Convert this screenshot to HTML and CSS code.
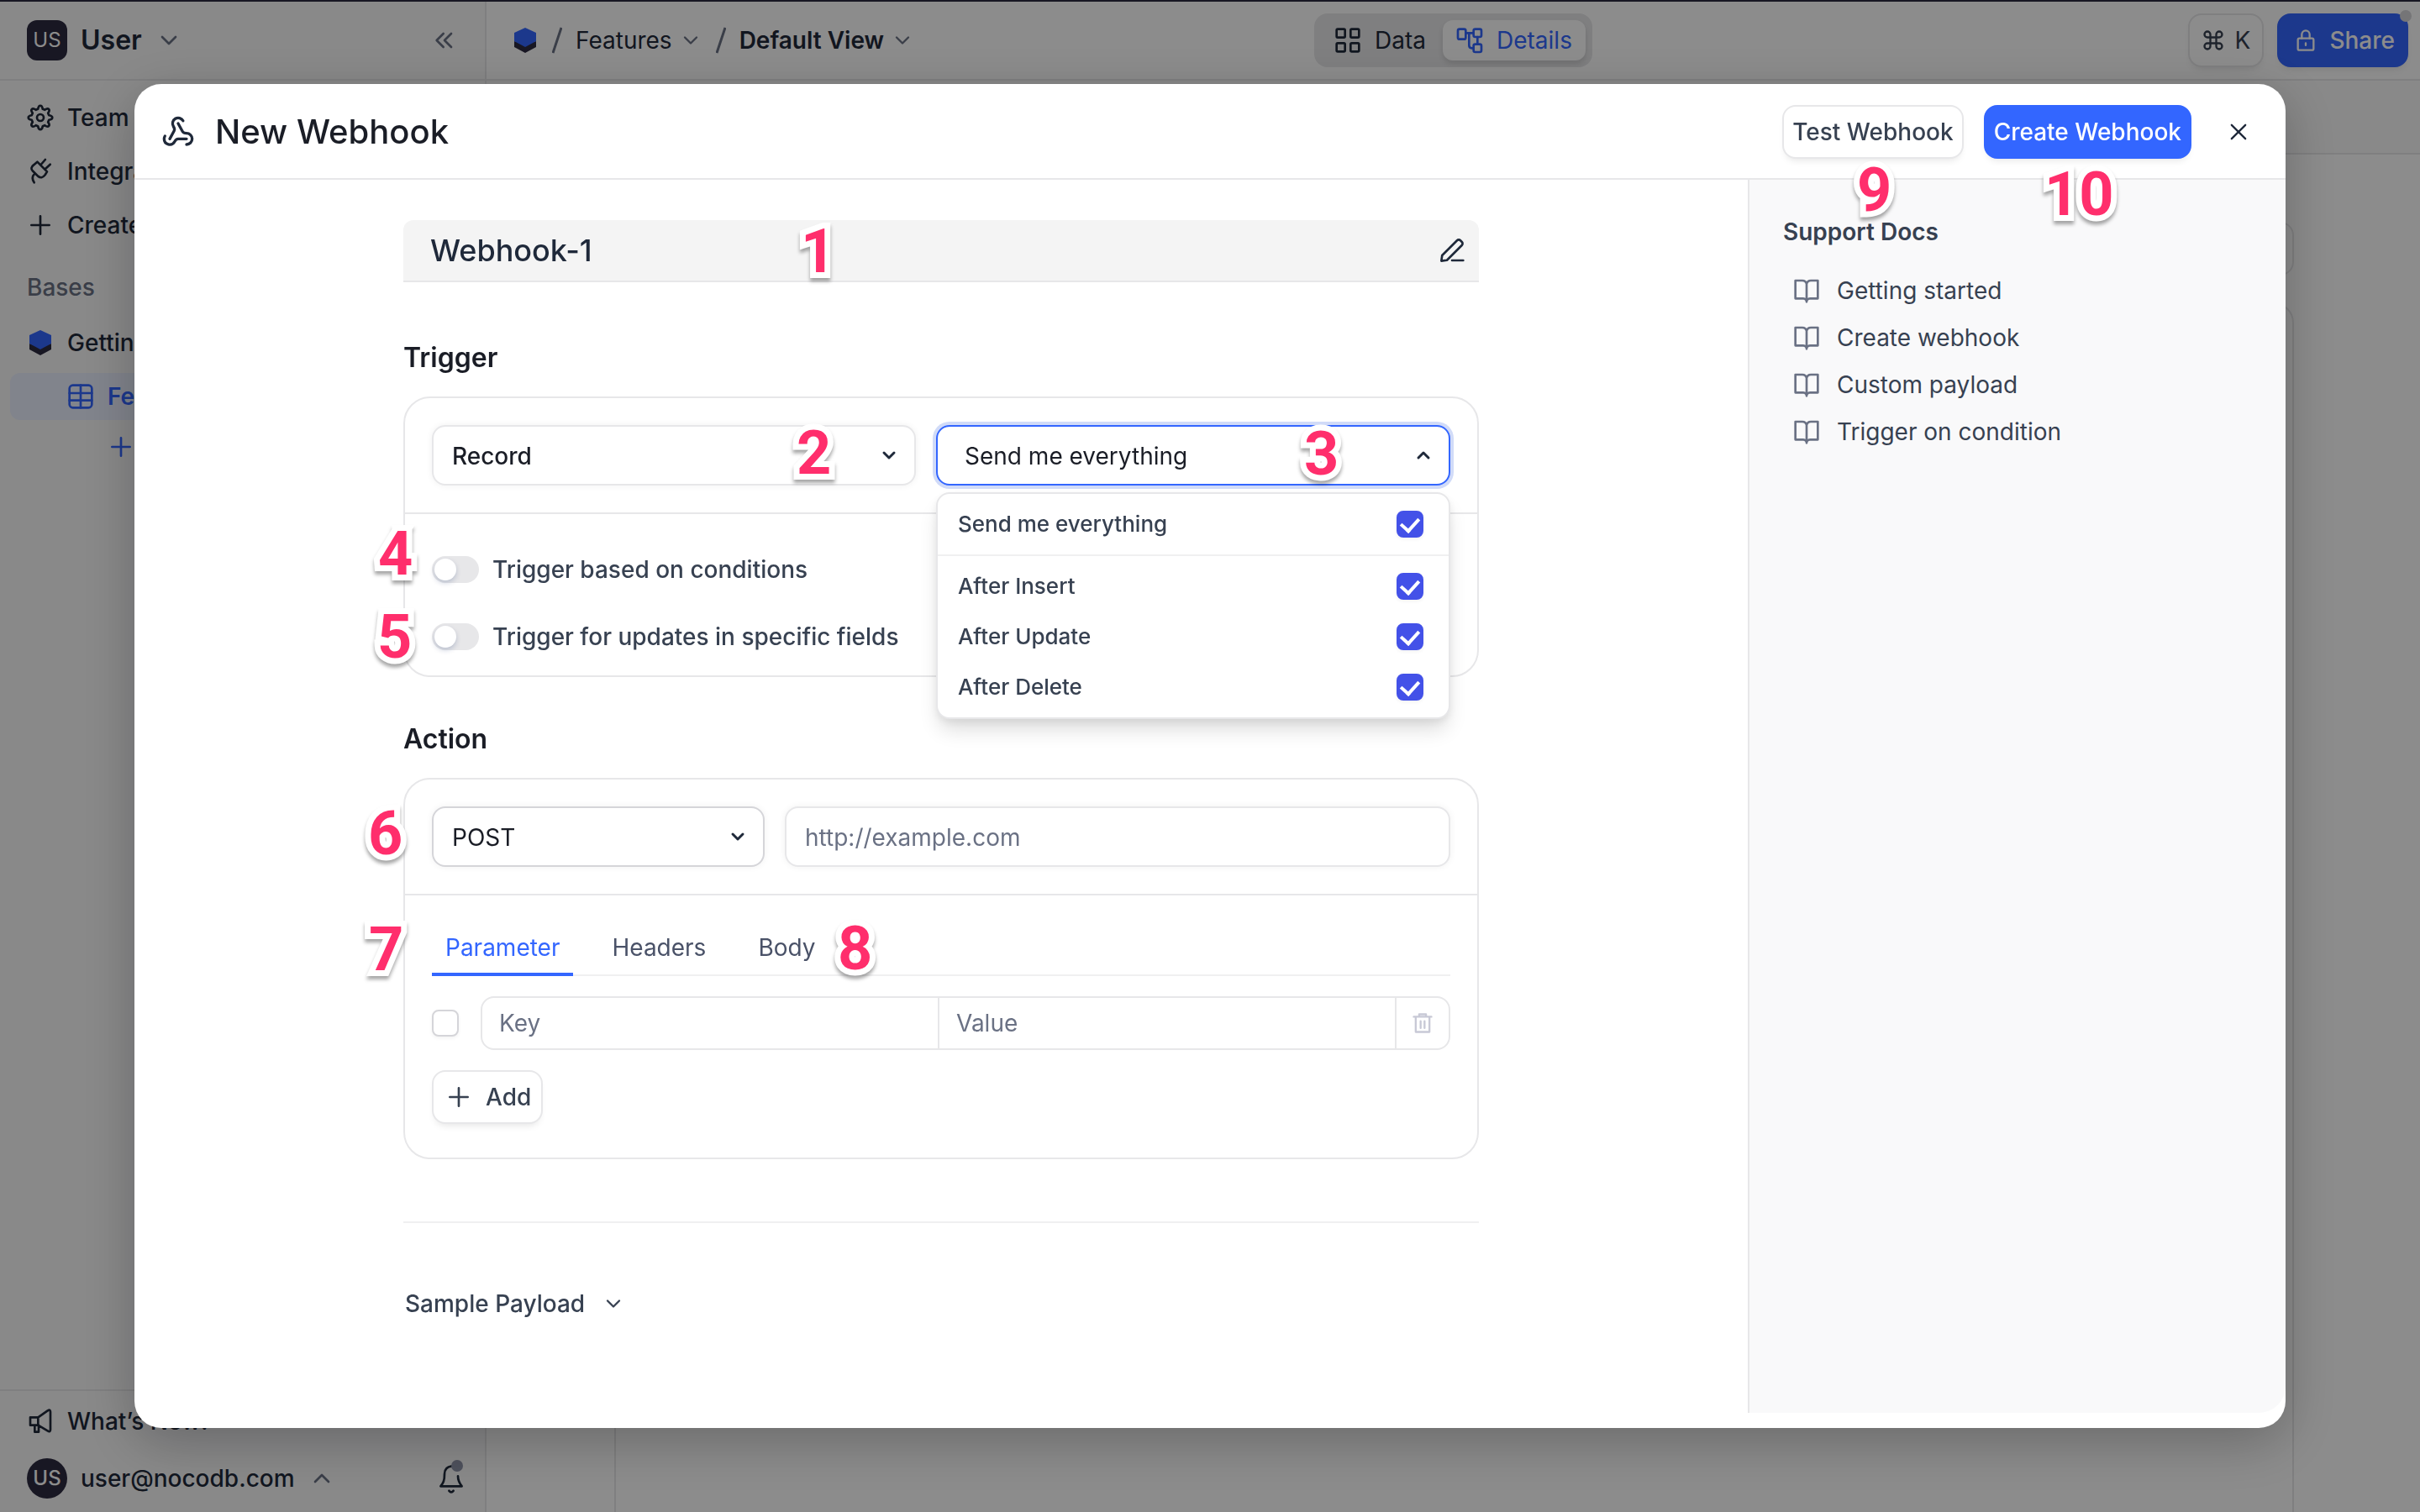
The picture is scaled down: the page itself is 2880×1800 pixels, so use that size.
FILE: index.html
```
<!DOCTYPE html>
<html lang="en">
<head>
<meta charset="UTF-8">
<meta name="viewport" content="width=device-width, initial-scale=1.0">
<title>New Webhook</title>
<link rel="stylesheet" href="styles.css">
</head>
<body>
<!-- icon set -->
<svg class="sprite" aria-hidden="true">
<symbol id="i-down" viewBox="0 0 24 24"><path d="m6 9 6 6 6-6"/></symbol>
<symbol id="i-up" viewBox="0 0 24 24"><path d="m6 15 6-6 6 6"/></symbol>
<symbol id="i-collapse" viewBox="0 0 24 24"><path d="m11 18-6-6 6-6M18 18l-6-6 6-6"/></symbol>
<symbol id="i-plus" viewBox="0 0 24 24"><path d="M12 4v16M4 12h16"/></symbol>
<symbol id="i-close" viewBox="0 0 24 24"><path d="m5 5 14 14M19 5 5 19"/></symbol>
<symbol id="i-gear" viewBox="0 0 24 24"><circle cx="12" cy="12" r="3"/><path d="M9.9 4.3C10.5.3 13.5.3 14.1 4.3L16 5.1C19.2 2.700 21.300 4.800 18.900 8L19.700 9.900C23.700 10.500 23.700 13.500 19.700 14.100L18.900 16C21.300 19.200 19.200 21.300 16 18.900L14.100 19.700C13.500 23.700 10.500 23.700 9.900 19.700L8 18.900C4.800 21.300 2.700 19.200 5.100 16L4.300 14.100C.3 13.500.3 10.500 4.300 9.900L5.100 8C2.700 4.800 4.800 2.700 8 5.100z"/></symbol>
<symbol id="i-plug" viewBox="-2 0 24 24"><path d="M7.300 3.500 16 12.300l-1.800 2.900q-3 3.800-6.200 1.200l-4.800-4.800q-2.600-2.600.8-5.300zM10.500 6l3.900-4.500M14.300 10l4.500-4.200M5 14q-3.500 3.500-.5 8"/></symbol>
<symbol id="i-table" viewBox="0 0 24 24"><rect x="2" y="2" width="20" height="20" rx="3"/><path d="M2 9h20M2 15.500h20M12 2v20"/></symbol>
<symbol id="i-cube" viewBox="0 0 26 30"><path class="cube-base" d="M0 16 13 20 26 16v7L13 30 0 23z"/><path class="cube-top" d="M13 0 26 6v10l-13 7-13-7V6z"/></symbol>
<symbol id="i-horn" viewBox="0 0 24 24"><path d="M3 8.500h7L18.500 2.500q2.500-1.500 2.500 1v16q0 2.500-2.500 1l-8.500-5H3zM10 8.500v7M7 15.500v6h3.500v-6"/></symbol>
<symbol id="i-bell" viewBox="0 0 24 28"><path d="M12.500 3C8.500 3.500 6 6 6 10c0 6-1 8-3.500 11h19c-2.500-3-3.500-5-3.500-9M10 25q2 2.500 4 0"/></symbol>
<symbol id="i-grid" viewBox="0 0 24 24"><rect x="2" y="2" width="7.500" height="7.500" rx="1"/><rect x="14.500" y="2" width="7.500" height="7.500" rx="1"/><rect x="2" y="14.500" width="7.500" height="7.500" rx="1"/><rect x="14.500" y="14.500" width="7.500" height="7.500" rx="1"/></symbol>
<symbol id="i-flow" viewBox="0 0 24 24"><rect x="1.500" y="2" width="7" height="9" rx="1.500"/><rect x="15.500" y="2" width="7" height="7" rx="1.500"/><rect x="15.500" y="15.500" width="7" height="7" rx="1.500"/><path d="M8.500 5.500h7M19 9v6.500M11.500 5.500v11q0 2.500 2.500 2.500h1.500"/></symbol>
<symbol id="i-cmd" viewBox="0 0 24 24"><path d="M18 3a3 3 0 0 0-3 3v12a3 3 0 1 0 3-3H6a3 3 0 1 0 3 3V6a3 3 0 1 0-3 3h12a3 3 0 0 0 0-6z"/></symbol>
<symbol id="i-lock" viewBox="0 0 24 24"><rect x="4" y="10" width="16" height="12" rx="1.500"/><path d="M8 10V6a4 4 0 0 1 8 0v4M12 15v2"/></symbol>
<symbol id="i-webhook" viewBox="0 0 24 24"><path d="M18 16.980h-5.990c-1.100 0-1.950.940-2.480 1.900A4 4 0 0 1 2 17c.010-.700.200-1.400.570-2"/><path d="m6 17 3.130-5.780c.530-.970.100-2.180-.500-3.100a4 4 0 1 1 6.890-4.060"/><path d="m12 6 3.130 5.730C15.660 12.700 16.900 13 18 13a4 4 0 0 1 0 8"/></symbol>
<symbol id="i-edit" viewBox="0 0 24 24"><path d="M12 21h10M16.500 3.200a2.100 2.100 0 0 1 3 0l1.300 1.300a2.100 2.100 0 0 1 0 3L7.500 20.800 2.500 21.500l.7-5z"/></symbol>
<symbol id="i-book" viewBox="0 0 24 24"><path d="M2 3h6a4 4 0 0 1 4 3 4 4 0 0 1 4-3h6v16h-7a3 3 0 0 0-3 3 3 3 0 0 0-3-3H2zM12 6v16"/></symbol>
<symbol id="i-trash" viewBox="0 0 24 24"><path d="M3 5.500h18M5 5.500V21h14V5.500M8.500 5.500V3h7v2.500M10 10v7M14 10v7"/></symbol>
</svg>

<div class="app">
<aside class="sidebar">
<div class="workspace">
<span class="avatar">US</span>
<span class="workspace-name">User</span>
<svg class="icon muted"><use href="#i-down"/></svg>
<svg class="icon muted push"><use href="#i-collapse"/></svg>
</div>
<nav class="side-nav">
<a class="side-link" href="#"><svg class="icon"><use href="#i-gear"/></svg>Team &amp; Settings</a>
<a class="side-link" href="#"><svg class="icon"><use href="#i-plug"/></svg>Integrations</a>
<a class="side-link" href="#"><svg class="icon"><use href="#i-plus"/></svg>Create Base</a>
<div class="side-title">Bases</div>
<a class="side-link" href="#"><svg class="icon cube"><use href="#i-cube"/></svg>Getting Started</a>
<a class="side-link active" href="#"><svg class="icon"><use href="#i-table"/></svg>Features</a>
<a class="side-link add-view" href="#" aria-label="Add view"><svg class="icon"><use href="#i-plus"/></svg></a>
</nav>
<div class="side-footer">
<a class="side-link" href="#"><svg class="icon"><use href="#i-horn"/></svg>What’s New!</a>
<div class="account">
<span class="avatar round">US</span>
<span>user@nocodb.com</span>
<svg class="icon muted"><use href="#i-up"/></svg>
<span class="bell push"><svg class="icon"><use href="#i-bell"/></svg></span>
</div>
</div>
</aside>

<div class="content">
<header class="topbar">
<div class="crumbs">
<svg class="icon cube"><use href="#i-cube"/></svg>
<svg class="slash" viewBox="0 0 12 32"><path d="M11 1 1 31"/></svg>
<span>Features</span>
<svg class="icon small muted"><use href="#i-down"/></svg>
<svg class="slash" viewBox="0 0 12 32"><path d="M11 1 1 31"/></svg>
<span class="strong">Default View</span>
<svg class="icon small muted"><use href="#i-down"/></svg>
</div>
<div class="switcher">
<button type="button" class="switch-item"><svg class="icon"><use href="#i-grid"/></svg>Data</button>
<button type="button" class="switch-item selected"><svg class="icon"><use href="#i-flow"/></svg>Details</button>
</div>
<div class="top-actions">
<button type="button" class="btn cmd"><svg class="icon small"><use href="#i-cmd"/></svg>K</button>
<button type="button" class="btn primary share"><svg class="icon small"><use href="#i-lock"/></svg>Share</button>
</div>
</header>
<div class="subbar"></div>
<div class="panels">
<div class="panel-head"></div>
<div class="panel-body"></div>
</div>
</div>
</div>

<div class="overlay">
<div class="modal" role="dialog" aria-labelledby="modalTitle">
<header class="modal-header">
<svg class="icon large"><use href="#i-webhook"/></svg>
<h1 id="modalTitle">New Webhook</h1>
<button type="button" class="btn">Test Webhook</button>
<button type="button" class="btn primary">Create Webhook</button>
<button type="button" class="close" aria-label="Close"><svg class="icon small"><use href="#i-close"/></svg></button>
</header>

<div class="modal-body">
<form class="form">
<div class="name-box">
<input type="text" class="name-input" value="Webhook-1" aria-label="Webhook name">
<svg class="icon"><use href="#i-edit"/></svg>
</div>

<h2>Trigger</h2>
<section class="card">
<div class="card-row trigger-row">
<div class="select">
<select aria-label="Event source"><option>Record</option></select>
<svg class="icon"><use href="#i-down"/></svg>
</div>
<div class="select open">
<select aria-label="Events"><option>Send me everything</option></select>
<svg class="icon"><use href="#i-up"/></svg>
<div class="menu">
<label class="menu-item all">Send me everything <input type="checkbox" class="check" checked></label>
<label class="menu-item">After Insert <input type="checkbox" class="check" checked></label>
<label class="menu-item">After Update <input type="checkbox" class="check" checked></label>
<label class="menu-item">After Delete <input type="checkbox" class="check" checked></label>
</div>
</div>
</div>
<div class="toggles">
<label class="toggle-row"><input type="checkbox" class="toggle">Trigger based on conditions</label>
<label class="toggle-row"><input type="checkbox" class="toggle">Trigger for updates in specific fields</label>
</div>
</section>

<h2 class="action-title">Action</h2>
<section class="card">
<div class="card-row action-row">
<div class="select method">
<select aria-label="Method"><option>POST</option></select>
<svg class="icon"><use href="#i-down"/></svg>
</div>
<input type="text" class="url" placeholder="http://example.com" aria-label="URL">
</div>
<div class="params">
<div class="tabs">
<button type="button" class="tab current">Parameter</button>
<button type="button" class="tab">Headers</button>
<button type="button" class="tab">Body</button>
</div>
<div class="param-row">
<input type="checkbox" class="check" aria-label="Enable parameter">
<div class="pair">
<input type="text" placeholder="Key" aria-label="Key">
<input type="text" placeholder="Value" aria-label="Value">
<button type="button" class="remove" aria-label="Remove"><svg class="icon small"><use href="#i-trash"/></svg></button>
</div>
</div>
<button type="button" class="btn add"><svg class="icon"><use href="#i-plus"/></svg>Add</button>
</div>
</section>

<hr>
<button type="button" class="payload">Sample Payload <svg class="icon small"><use href="#i-down"/></svg></button>
</form>

<aside class="docs">
<h3>Support Docs</h3>
<a href="#"><svg class="icon"><use href="#i-book"/></svg>Getting started</a>
<a href="#"><svg class="icon"><use href="#i-book"/></svg>Create webhook</a>
<a href="#"><svg class="icon"><use href="#i-book"/></svg>Custom payload</a>
<a href="#"><svg class="icon"><use href="#i-book"/></svg>Trigger on condition</a>
</aside>
</div>

<!-- numbered callouts -->
<span class="pin pin-1">1</span>
<span class="pin pin-2">2</span>
<span class="pin pin-3">3</span>
<span class="pin pin-4">4</span>
<span class="pin pin-5">5</span>
<span class="pin pin-6">6</span>
<span class="pin pin-7">7</span>
<span class="pin pin-8">8</span>
<span class="pin pin-9">9</span>
<span class="pin pin-10">10</span>
</div>
</div>
</body>
</html>
```
FILE: styles.css
```
* {
    box-sizing: border-box;
}
body {
    margin: 0;
    font-family: Inter, "Liberation Sans", sans-serif;
    font-size: 28px;
    line-height: 40px;
    color: #1f293a;
}
h1, h2, h3 {
    margin: 0;
}
a {
    color: inherit;
    text-decoration: none;
}
button, input, select {
    font: inherit;
    color: inherit;
    margin: 0;
}
button {
    cursor: pointer;
}
.sprite {
    display: none;
}
.icon {
    width: 32px;
    height: 32px;
    flex: none;
    fill: none;
    stroke: currentColor;
    stroke-width: 2;
    stroke-linecap: round;
    stroke-linejoin: round;
}
.icon.small {
    width: 28px;
    height: 28px;
}
.icon.large {
    width: 40px;
    height: 40px;
}
.muted {
    color: #6a7184;
}
.push {
    margin-left: auto;
}
.icon.cube {
    height: 30px;
    stroke: none;
}
.cube-base {
    fill: #2d2a40;
}
.cube-top {
    fill: #3366ff;
}
.btn {
    display: flex;
    align-items: center;
    justify-content: center;
    height: 64px;
    padding: 0 10px;
    border: 2px solid #e7e7e9;
    border-radius: 16px;
    background: #fff;
    color: #374151;
    font-weight: 500;
    box-shadow: 0 6px 8px -4px rgba(0, 0, 0, 0.1);
}
.btn.primary {
    border-color: #3366ff;
    background: #3366ff;
    color: #fff;
}

/* page behind the dialog */
.app {
    display: flex;
    height: 100vh;
    border-top: 2px solid #2d2a40;
    background: #fff;
    overflow: hidden;
}
.sidebar {
    display: flex;
    flex-direction: column;
    width: 579px;
    flex: none;
    border-right: 2px solid #e7e7e9;
    background: #f9f9fa;
    font-weight: 500;
}
.workspace {
    display: flex;
    align-items: center;
    gap: 16px;
    height: 94px;
    padding: 0 32px;
    border-bottom: 2px solid #e7e7e9;
}
.workspace-name {
    font-size: 32px;
    font-weight: 600;
}
.avatar {
    width: 48px;
    height: 48px;
    flex: none;
    border-radius: 12px;
    background: #2d2a40;
    color: #fff;
    font-size: 24px;
    font-weight: 400;
    line-height: 48px;
    text-align: center;
}
.avatar.round {
    border-radius: 50%;
    font-weight: 500;
}
.side-nav {
    flex: 1;
    padding: 12px;
}
.side-link {
    display: flex;
    align-items: center;
    gap: 16px;
    height: 64px;
    padding: 0 20px;
    white-space: nowrap;
}
.side-title {
    padding: 22px 20px 14px;
    color: #6a7184;
}
.side-link.active {
    height: 56px;
    margin-top: 4px;
    padding-left: 68px;
    border-radius: 12px;
    background: #ebf0ff;
    color: #3366ff;
    font-weight: 600;
}
.side-link.add-view {
    padding-left: 116px;
    color: #3366ff;
}
.side-footer {
    border-top: 2px solid #e7e7e9;
    padding: 4px 12px;
}
.account {
    display: flex;
    align-items: center;
    gap: 16px;
    height: 72px;
    padding: 0 12px 0 20px;
}
.bell {
    position: relative;
    display: flex;
}
.bell .icon {
    height: 40px;
}
.bell::after {
    content: "";
    position: absolute;
    top: -2px;
    right: 2px;
    width: 14px;
    height: 14px;
    border-radius: 50%;
    background: #8e93a8;
}
.content {
    flex: 1;
    display: flex;
    flex-direction: column;
    min-width: 0;
}
.topbar {
    display: grid;
    grid-template-columns: 1fr auto 1fr;
    align-items: center;
    height: 94px;
    flex: none;
    padding: 0 14px;
    border-bottom: 2px solid #e7e7e9;
}
.crumbs {
    display: flex;
    align-items: center;
    gap: 8px;
    padding-left: 16px;
}
.slash {
    width: 12px;
    height: 32px;
    margin: 0 8px;
    fill: none;
    stroke: #6a7184;
    stroke-width: 3;
}
.strong {
    font-weight: 600;
}
.switcher {
    display: flex;
    gap: 4px;
    height: 64px;
    padding: 8px;
    border-radius: 16px;
    background: #e7e7e9;
}
.switch-item {
    display: flex;
    align-items: center;
    gap: 16px;
    padding: 0 16px;
    border: none;
    border-radius: 12px;
    background: none;
}
.switch-item.selected {
    background: #fff;
    color: #3366ff;
    box-shadow: 0 4px 6px rgba(0, 0, 0, 0.12);
}
.top-actions {
    display: flex;
    justify-content: flex-end;
    gap: 16px;
}
.cmd {
    gap: 12px;
    padding: 0 14px;
    font-weight: 400;
}
.share {
    position: relative;
    gap: 14px;
    padding: 0 14px 0 18px;
}
.share::after {
    content: "";
    position: absolute;
    top: -6px;
    right: -6px;
    width: 14px;
    height: 14px;
    border-radius: 50%;
    background: #d5d5d9;
}
.subbar {
    height: 88px;
    flex: none;
    border-bottom: 2px solid #e7e7e9;
    background: #f9f9fa;
}
.panels {
    flex: 1;
    display: flex;
    flex-direction: column;
    padding: 80px 150px 0 152px;
}
.panel-head {
    height: 64px;
    margin-bottom: 32px;
    border: 2px solid #e7e7e9;
    border-radius: 16px;
}
.panel-body {
    flex: 1;
    border: 2px solid #e7e7e9;
    border-bottom: none;
    border-radius: 24px 24px 0 0;
}

/* dialog */
.overlay {
    position: fixed;
    inset: 0;
    display: flex;
    padding: 100px 160px;
    background: rgba(0, 0, 0, 0.45);
}
.modal {
    position: relative;
    flex: 1;
    display: flex;
    flex-direction: column;
    padding-bottom: 18px;
    border-radius: 32px;
    background: #fff;
    box-shadow: 0 16px 64px rgba(0, 0, 0, 0.25);
}
.modal-header {
    display: flex;
    align-items: center;
    gap: 24px;
    height: 114px;
    flex: none;
    padding: 2px 24px 0 32px;
    border-bottom: 2px solid #e7e7e9;
}
.modal-header h1 {
    flex: 1;
    font-size: 40px;
    line-height: 56px;
    font-weight: 500;
    color: #1a1d26;
}
.close {
    display: flex;
    align-items: center;
    justify-content: center;
    width: 64px;
    height: 64px;
    padding: 0;
    border: none;
    background: none;
}
.modal-body {
    flex: 1;
    display: flex;
    min-height: 0;
}
.form {
    width: 1280px;
    margin: 0 auto;
    padding-top: 48px;
}
.name-box {
    display: flex;
    align-items: center;
    height: 74px;
    padding: 0 16px 0 32px;
    border-bottom: 2px solid #e7e7e9;
    border-radius: 12px 12px 0 0;
    background: #f4f4f4;
}
.name-input {
    flex: 1;
    padding: 0;
    border: none;
    background: none;
    font-size: 36px;
    font-weight: 500;
}
h2 {
    margin: 66px 0 22px;
    font-size: 32px;
    line-height: 48px;
    font-weight: 600;
    color: #1a1d26;
}
h2.action-title {
    margin-top: 50px;
}
.card {
    border: 2px solid #e7e7e9;
    border-radius: 32px;
}
.card-row {
    display: grid;
    gap: 24px;
    padding: 32px;
    border-bottom: 2px solid #e7e7e9;
}
.trigger-row {
    grid-template-columns: 576fr 612fr;
}
.action-row {
    grid-template-columns: 1fr 2fr;
}
.select {
    position: relative;
}
.select select, .url {
    width: 100%;
    height: 72px;
    padding: 2px 22px 0;
    border: 2px solid #e7e7e9;
    border-radius: 16px;
    background: #fff;
    box-shadow: 0 0 8px rgba(0, 0, 0, 0.06);
    appearance: none;
    outline: none;
}
.select select {
    font-weight: 500;
    color: #1a1d26;
}
.select.method select {
    border-color: #d5d5d9;
    font-weight: 400;
}
.select > .icon {
    position: absolute;
    top: 24px;
    right: 20px;
    width: 24px;
    height: 24px;
    stroke-width: 3;
}
.select.open select {
    padding-left: 32px;
    border-color: #3366ff;
    box-shadow: 0 0 0 4px #d1dbf8;
    font-weight: 400;
}
::placeholder {
    color: #6a7184;
    opacity: 1;
}
.menu {
    position: absolute;
    top: 80px;
    left: 0;
    right: 0;
    z-index: 2;
    padding-bottom: 6px;
    border: 2px solid #e7e7e9;
    border-radius: 16px;
    background: #fff;
    box-shadow: 0 16px 24px -4px rgba(0, 0, 0, 0.14), 0 4px 8px rgba(0, 0, 0, 0.06);
}
.menu-item {
    display: flex;
    align-items: center;
    justify-content: space-between;
    height: 60px;
    padding: 0 30px 0 24px;
    color: #374151;
    font-size: 26px;
    font-weight: 500;
}
.menu-item.all {
    height: 74px;
    margin-bottom: 6px;
    border-bottom: 2px solid #f0f0f1;
}
.check {
    display: grid;
    place-items: center;
    width: 32px;
    height: 32px;
    flex: none;
    border: 2px solid #d5d5d9;
    border-radius: 8px;
    background: #fff;
    box-shadow: 0 2px 4px rgba(0, 0, 0, 0.05);
    appearance: none;
}
.check:checked {
    border-color: #4351e8;
    background: #4351e8;
}
.check:checked::after {
    content: "";
    width: 10px;
    height: 17px;
    margin-top: -4px;
    border: solid #fff;
    border-width: 0 4px 4px 0;
    transform: rotate(42deg);
}
.toggles {
    display: flex;
    flex-direction: column;
    gap: 40px;
    padding: 46px 32px 26px;
}
.toggle-row {
    display: flex;
    align-items: center;
    gap: 16px;
    color: #374151;
    font-weight: 500;
}
.toggle {
    width: 56px;
    height: 32px;
    padding: 3px;
    border-radius: 16px;
    background: #e7e7e9;
    appearance: none;
}
.toggle::before {
    content: "";
    display: block;
    width: 26px;
    height: 26px;
    border-radius: 50%;
    background: #fff;
    box-shadow: 0 3px 6px rgba(0, 35, 100, 0.2);
}
.params {
    padding: 32px 32px 40px;
}
.tabs {
    display: flex;
    gap: 30px;
    box-shadow: inset 0 -2px #f0f0f1;
}
.tab {
    padding: 8px 16px;
    border: none;
    border-bottom: 4px solid transparent;
    background: none;
    line-height: 44px;
    color: #4a5268;
}
.tab.current {
    border-color: #3366ff;
    border-radius: 4px 4px 0 0;
    color: #3366ff;
}
.param-row {
    display: flex;
    align-items: center;
    gap: 26px;
    margin: 24px 0;
}
.pair {
    flex: 1;
    display: grid;
    grid-template-columns: 1fr 1fr 62px;
    height: 64px;
    border: 2px solid #e7e7e9;
    border-radius: 16px;
}
.pair input {
    min-width: 0;
    padding: 0 20px;
    border: none;
    border-right: 2px solid #e7e7e9;
    background: none;
}
.remove {
    display: flex;
    align-items: center;
    justify-content: center;
    padding: 0;
    border: none;
    background: none;
    color: #c8c9d6;
}
.add {
    gap: 16px;
    padding: 0 12px 0 14px;
}
hr {
    height: 2px;
    margin: 74px 0 64px;
    border: none;
    background: #f0f0f1;
}
.payload {
    display: flex;
    align-items: center;
    gap: 20px;
    height: 64px;
    padding: 0 2px;
    border: none;
    background: none;
    color: #374151;
    font-weight: 500;
}
.docs {
    width: 640px;
    padding: 40px;
    border-left: 2px solid #e7e7e9;
    border-radius: 0 0 32px 0;
    background: #f9f9fa;
    color: #374151;
}
.docs h3 {
    margin-bottom: 20px;
    font-size: 28px;
    line-height: 44px;
    font-weight: 600;
}
.docs a {
    display: flex;
    align-items: center;
    gap: 20px;
    height: 56px;
    padding-left: 12px;
}
.docs .icon {
    color: #6a7184;
}

/* callout digits */
.pin {
    position: absolute;
    z-index: 3;
    font-family: Roboto, "Liberation Sans", sans-serif;
    font-size: 72px;
    line-height: 72px;
    font-weight: 700;
    color: #ff2e6c;
    -webkit-text-stroke: 14px #fff;
    paint-order: stroke fill;
    stroke-linejoin: round;
    filter: drop-shadow(0 4px 2px rgba(0, 0, 0, 0.35));
}
.pin-1 {
    left: 793px;
    top: 164px;
}
.pin-2 {
    left: 788px;
    top: 404px;
}
.pin-3 {
    left: 1392px;
    top: 405px;
}
.pin-4 {
    left: 290px;
    top: 524px;
}
.pin-5 {
    left: 289px;
    top: 623px;
}
.pin-6 {
    left: 278px;
    top: 857px;
}
.pin-7 {
    left: 279px;
    top: 995px;
}
.pin-8 {
    left: 837px;
    top: 994px;
}
.pin-9 {
    left: 2050px;
    top: 91px;
}
.pin-10 {
    left: 2273px;
    top: 96px;
}
```
